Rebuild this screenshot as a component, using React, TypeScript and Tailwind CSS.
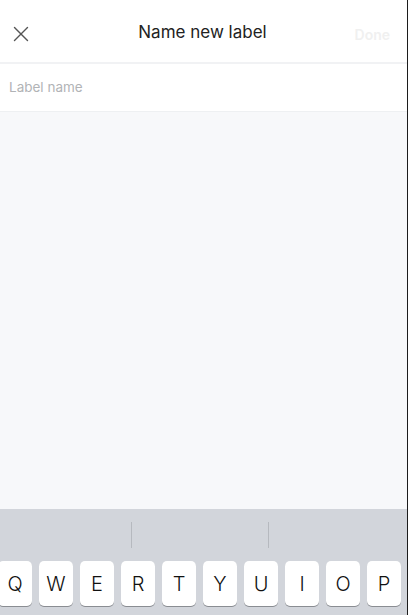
import { X } from "lucide-react";

const keys = ["Q", "W", "E", "R", "T", "Y", "U", "I", "O", "P"];

export default function App() {
  return (
    <div className="flex h-[615px] w-[408px] flex-col overflow-hidden border-r border-[#1c1c1c] bg-[#f7f8fa] font-['Inter',sans-serif]">
      <div className="relative flex h-[62px] items-center justify-center bg-white pt-[4px]">
        <button className="absolute left-[8px] top-[21px] text-[#555]">
          <X size={26} strokeWidth={1.3} />
        </button>
        <h1 className="ml-[-2px] text-[17px] text-[#222]">Name new label</h1>
        <span className="absolute right-[17px] top-[24px] text-[14px] font-semibold text-[#f0f0f0]">Done</span>
      </div>
      <div className="h-[2px] bg-[#f1f2f4]" />
      <div className="flex h-[48px] items-center border-b border-[#eef0f2] bg-white px-[9px]">
        <span className="text-[13.5px] text-[#b1b3b6]">Label name</span>
      </div>
      <div className="flex-1" />
      <div className="flex h-[106px] flex-col bg-[#d2d5db]">
        <div className="flex h-[52px] items-center">
          <div className="w-[131px]" />
          <div className="h-[26px] w-px bg-[#b6b9bf]" />
          <div className="w-[136px]" />
          <div className="h-[26px] w-px bg-[#b6b9bf]" />
          <div className="flex-1" />
        </div>
        <div className="ml-[-2px] flex gap-[7px]">
          {keys.map((k) => (
            <div
              key={k}
              className="flex h-[45px] w-[34px] items-center justify-center rounded-[5px] bg-white text-[20px] font-light text-[#111] shadow-[0_1px_0_#8a8d92]"
            >
              {k}
            </div>
          ))}
        </div>
      </div>
    </div>
  );
}
